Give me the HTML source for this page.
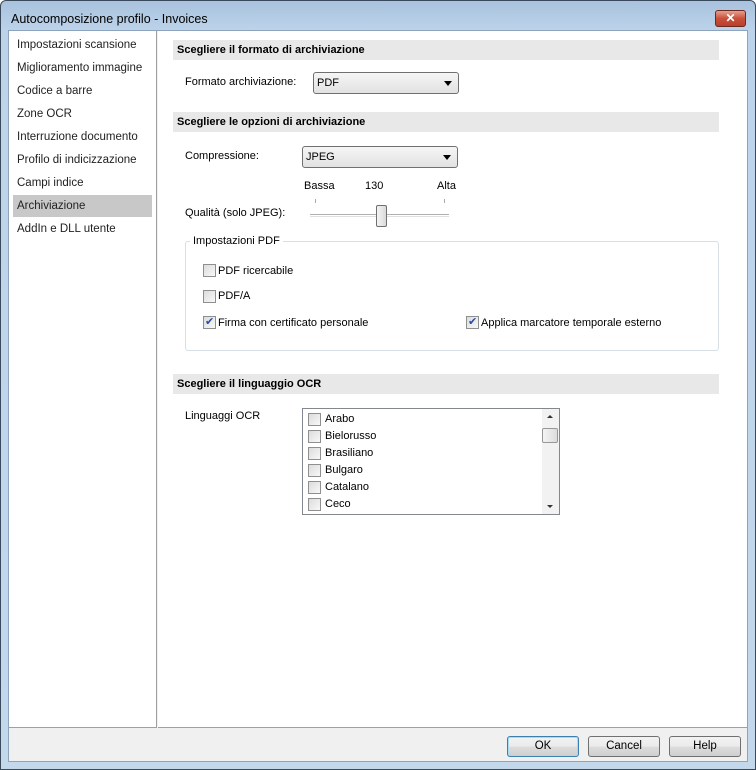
<!DOCTYPE html>
<html><head><meta charset="utf-8"><style>
*{margin:0;padding:0;box-sizing:border-box}
body{width:756px;height:770px;overflow:hidden;background:#fff;font-family:"Liberation Sans",sans-serif;font-size:11px;color:#000;position:relative}
.a{position:absolute}
.frame{left:0;top:0;width:756px;height:770px;border:1px solid #3a4a5c;border-radius:6px 6px 0 0;background:linear-gradient(#a9c2dd,#bcd3ea 30px,#c4d8ec);}
.title{left:11px;top:12px;font-size:12.5px;color:#000}
.close{left:715px;top:10px;width:31px;height:17px;border:1px solid #6b2a20;border-radius:3px;background:linear-gradient(#e8a08f,#c9503a 50%,#b8402c);color:#fff;font-weight:bold;text-align:center;font-size:12px;line-height:15px}
.client{left:8px;top:30px;width:740px;height:732px;background:#f0f0f0;border:1px solid #8ea4bd}
.left{left:9px;top:31px;width:148px;height:697px;background:#fff;border-right:1px solid #a0a0a0;border-bottom:1px solid #a0a0a0}
.right{left:158px;top:31px;width:589px;height:697px;background:#fff;border-bottom:1px solid #a0a0a0}
.li{left:17px;font-size:11.5px;color:#222}
.sel{left:13px;top:195px;width:139px;height:22px;background:#c8c8c8}
.hdr{left:173px;width:546px;height:20px;background:#e8e8e8;font-weight:bold;padding:4px 0 0 4px;font-size:11px}
.dd{border:1px solid #707070;border-radius:3px;background:linear-gradient(#f6f6f6,#e2e2e2);padding:4px 0 0 3px}
.dd:after{content:"";position:absolute;right:6px;top:8px;border:4px solid transparent;border-top:5px solid #000}
.cb{width:13px;height:13px;border:1px solid #8e8f8f;background:linear-gradient(135deg,#dcdcdc,#f8f8f8)}
.ck:after{content:"✔";position:absolute;left:1px;top:-2px;font-size:11px;color:#2a4aa8}
.btn{top:736px;width:72px;height:21px;border:1px solid #707070;border-radius:3px;background:linear-gradient(#f2f2f2,#ebebeb 50%,#dddddd 51%,#cfcfcf);text-align:center;line-height:19px;font-size:11.5px}
</style></head><body>
<div class="a frame"></div>
<div class="a title">Autocomposizione profilo - Invoices</div>
<div class="a close">✕</div>
<div class="a client"></div>
<div class="a left"></div>
<div class="a right"></div>
<div class="a sel"></div>
<div class="a li" style="top:39px">Impostazioni scansione</div>
<div class="a li" style="top:62px">Miglioramento immagine</div>
<div class="a li" style="top:85px">Codice a barre</div>
<div class="a li" style="top:108px">Zone OCR</div>
<div class="a li" style="top:131px">Interruzione documento</div>
<div class="a li" style="top:154px">Profilo di indicizzazione</div>
<div class="a li" style="top:177px">Campi indice</div>
<div class="a li" style="top:200px">Archiviazione</div>
<div class="a li" style="top:223px">AddIn e DLL utente</div>

<div class="a hdr" style="top:40px">Scegliere il formato di archiviazione</div>
<div class="a" style="left:185px;top:76px">Formato archiviazione:</div>
<div class="a dd" style="left:313px;top:72px;width:146px;height:22px">PDF</div>

<div class="a hdr" style="top:112px">Scegliere le opzioni di archiviazione</div>
<div class="a" style="left:185px;top:150px">Compressione:</div>
<div class="a dd" style="left:302px;top:146px;width:156px;height:22px">JPEG</div>
<div class="a" style="left:304px;top:180px">Bassa</div>
<div class="a" style="left:365px;top:180px">130</div>
<div class="a" style="left:437px;top:180px">Alta</div>
<div class="a" style="left:185px;top:207px">Qualità (solo JPEG):</div>
<div class="a" style="left:315px;top:199px;width:1px;height:4px;background:#aaa"></div>
<div class="a" style="left:444px;top:199px;width:1px;height:4px;background:#aaa"></div>
<div class="a" style="left:310px;top:214px;width:139px;height:3px;border-top:1px solid #b0b0b0;border-bottom:1px solid #e0e0e0"></div>
<div class="a" style="left:376px;top:205px;width:11px;height:22px;border:1px solid #6f6f6f;border-radius:2px;background:linear-gradient(90deg,#f4f4f4,#dadada)"></div>

<div class="a" style="left:185px;top:241px;width:534px;height:110px;border:1px solid #d5dfe5;border-radius:3px"></div>
<div class="a" style="left:190px;top:235px;background:#fff;padding:0 3px">Impostazioni PDF</div>
<div class="a cb" style="left:203px;top:264px"></div><div class="a" style="left:218px;top:265px">PDF ricercabile</div>
<div class="a cb" style="left:203px;top:290px"></div><div class="a" style="left:218px;top:290px">PDF/A</div>
<div class="a cb ck" style="left:203px;top:316px"></div><div class="a" style="left:218px;top:317px">Firma con certificato personale</div>
<div class="a cb ck" style="left:466px;top:316px"></div><div class="a" style="left:481px;top:317px">Applica marcatore temporale esterno</div>

<div class="a hdr" style="top:374px">Scegliere il linguaggio OCR</div>
<div class="a" style="left:185px;top:410px">Linguaggi OCR</div>
<div class="a" style="left:302px;top:408px;width:258px;height:107px;border:1px solid #828790"></div>
<div class="a" style="left:542px;top:409px;width:17px;height:105px;background:#f2f2f2"></div>
<div class="a" style="left:547px;top:415px;border:3px solid transparent;border-bottom:3px solid #333;border-top:0"></div>
<div class="a" style="left:547px;top:505px;border:3px solid transparent;border-top:3px solid #333;border-bottom:0"></div>
<div class="a" style="left:542px;top:428px;width:16px;height:15px;border:1px solid #979797;border-radius:2px;background:linear-gradient(90deg,#f4f4f4,#dcdcdc)"></div>
<div class="a cb" style="left:308px;top:413px"></div><div class="a" style="left:325px;top:413px">Arabo</div>
<div class="a cb" style="left:308px;top:430px"></div><div class="a" style="left:325px;top:430px">Bielorusso</div>
<div class="a cb" style="left:308px;top:447px"></div><div class="a" style="left:325px;top:447px">Brasiliano</div>
<div class="a cb" style="left:308px;top:464px"></div><div class="a" style="left:325px;top:464px">Bulgaro</div>
<div class="a cb" style="left:308px;top:481px"></div><div class="a" style="left:325px;top:481px">Catalano</div>
<div class="a cb" style="left:308px;top:498px"></div><div class="a" style="left:325px;top:498px">Ceco</div>

<div class="a btn" style="left:507px;border-color:#3c7fb1;box-shadow:inset 0 0 0 1px #a6dbf4">OK</div>
<div class="a btn" style="left:588px">Cancel</div>
<div class="a btn" style="left:669px">Help</div>
</body></html>
